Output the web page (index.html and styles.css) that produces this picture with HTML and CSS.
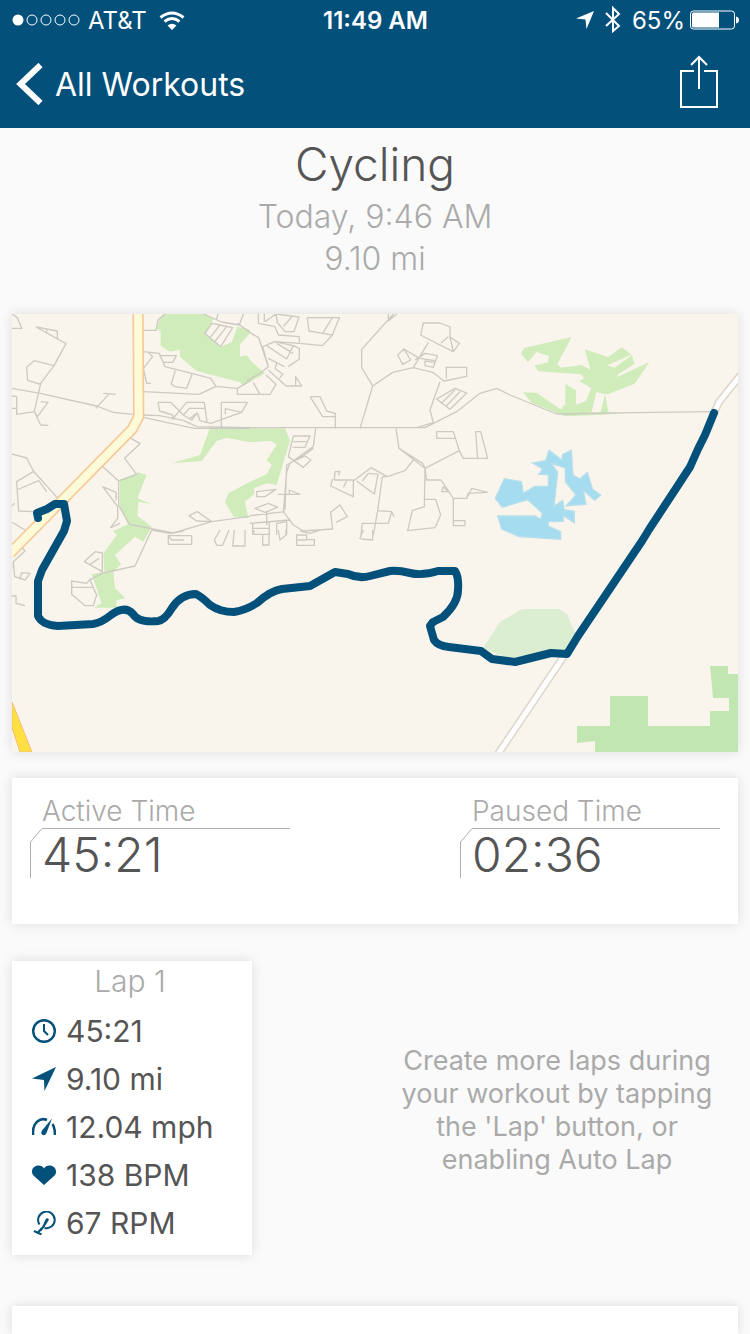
FILE: index.html
```html
<!DOCTYPE html>
<html lang="en">
<head>
<meta charset="utf-8">
<meta name="viewport" content="width=device-width, initial-scale=1">
<title>Cycling workout</title>
<link rel="stylesheet" href="styles.css">
</head>
<body>
<header class="top">
  <div class="status">
    <div class="status-side">
      <svg class="signal" width="68" height="12" viewBox="0 0 68 12" aria-hidden="true">
        <circle cx="6" cy="6" r="5.5" fill="#fff"/>
        <g fill="none" stroke="#fff"><circle cx="20" cy="6" r="5"/><circle cx="34" cy="6" r="5"/><circle cx="48" cy="6" r="5"/><circle cx="62" cy="6" r="5"/></g>
      </svg>
      <span class="carrier">AT&amp;T</span>
      <svg width="26" height="19" viewBox="0 0 26 19" aria-hidden="true">
        <g fill="none" stroke="#fff" stroke-width="3"><path d="M1.500 6.500Q13-2.500 24.500 6.500"/><path d="M5.500 10.500Q13 4.500 20.500 10.500"/></g>
        <path d="M8.500 14.500Q13 11 17.500 14.500L13 19Z" fill="#fff"/>
      </svg>
    </div>
    <span class="clock">11:49 AM</span>
    <div class="status-side status-end">
      <svg width="18" height="18" viewBox="0 0 18 18" aria-hidden="true"><path d="M18 0L10.500 18L9.500 8.500L0 7.500Z" fill="#fff"/></svg>
      <svg class="bluetooth" width="16" height="28" viewBox="0 0 16 28" aria-hidden="true"><path d="M1 7L14 20L8 25V2L14 8L1 20" fill="none" stroke="#fff" stroke-width="2"/></svg>
      <span class="percent">65%</span>
      <svg width="49" height="20" viewBox="0 0 49 20" aria-hidden="true"><rect x=".5" y="1" width="44" height="18" rx="3" fill="none" stroke="#fff"/><path d="M3.500 2.500H29V17.500H3.500Q2 17.500 2 16V4Q2 2.500 3.500 2.500ZM46 6.500Q49 7 49 10T46 13.500Z" fill="#fff"/></svg>
    </div>
  </div>
  <nav class="nav">
    <a class="back" href="#workouts">
      <svg width="27" height="42" viewBox="0 0 27 42" aria-hidden="true"><path d="M24.500 2L4.500 21L24.500 40" fill="none" stroke="#fff" stroke-width="6"/></svg>
      <span>All Workouts</span>
    </a>
    <button class="share" type="button" aria-label="Share">
      <svg width="38" height="54" viewBox="0 0 38 54" aria-hidden="true"><path d="M14 16H1V52H37V16H24M19 34V2M11 10L19 2L27 10" fill="none" stroke="#fff" stroke-width="2"/></svg>
    </button>
  </nav>
</header>

<main class="page">
  <section class="summary">
    <h1 class="title">Cycling</h1>
    <p class="meta">Today, 9:46 AM</p>
    <p class="meta">9.10 mi</p>
  </section>

  <svg class="map card" viewBox="12 314 726 438" preserveAspectRatio="xMidYMid slice" role="img" aria-label="Route map">
    <rect x="0" y="300" width="760" height="470" fill="#f9f5ed"/>
    <g fill="#d0ecbb">
      <g transform="translate(0 305) scale(.33333)">
        <path d="M495 27H610L640 42L625 75L614 88L662 125L695 112L712 65L750 75V85L720 118V155L740 150L755 170L795 205L730 242L720 232L590 198L540 155V135L510 140L482 122V80L470 70L480 40Z"/>
        <path d="M630 370H855L870 408L830 540L800 535L762 550V568L735 590L745 640L700 635L675 590L685 565L750 530L800 508L815 480L800 465L830 420L815 408L750 412L680 398L650 408L605 468L515 475L600 450Z"/>
        <path d="M360 525L415 502L440 510L412 580L455 598L415 590L412 632L455 665L430 710L405 695L345 750L363 778L340 800L345 850L377 880L350 885V908H280L305 895L275 808L313 800L310 745L350 690L340 678L385 658L360 610Z"/>
      </g>
      <g transform="translate(490 305) scale(.33333)">
        <path d="M102 129L245 96L202 177L213 188L274 180L302 194L284 133L355 156L396 127L424 149L352 181L373 188L426 151L433 177L382 209V216L478 171L434 236L355 267L345 268L357 327H330L345 268L319 261L305 322L410 324L340 329L224 334L125 293L99 262L140 263L212 313L226 298V237L258 256V299L288 288L304 250L268 228L283 219L272 208L145 199L133 182L174 172L177 154L139 141L114 172L93 146Z"/>
      </g>
    </g>
    <g transform="translate(480 440) scale(.33333)" fill="#a6dcf0" stroke="#b9dfea" stroke-width="4">
      <path d="M73 116L124 125L130 160L164 139H205V104L177 103L188 86L157 69L197 62L207 31L246 60L248 43L274 31L279 105L300 117L322 97L338 148L362 165L344 181L310 151L318 193L258 198L288 165L256 125V84L214 70L233 97L222 199L248 181L252 209L283 214V249L250 226V244L205 245V258L242 275V298L117 290L65 267L53 228H164L182 238L187 219L143 179L67 202L46 175Z"/>
    </g>
    <g fill="#c2e6b1">
      <path d="M577 726H610V696H648V726H710V711H729V698H713L710 666H728V674H740V754H595V741L577 743Z"/>
      <path d="M483 648L500 622L522 609H559L567 614L576 635L568 655L515 662Z" fill="#dbeed1"/>
    </g>
    <g fill="none" stroke="#cdcac3" stroke-width="4" stroke-linejoin="round">
      <g transform="translate(0 305) scale(.33333)">
        <path d="M36 27L52 38L65 70H36M108 66L198 116L162 182L122 235L103 320L50 328V275L36 273M108 66L172 78V102M140 82V70M162 182L102 167L80 187L83 226L122 238M36 250L120 265L290 303L340 322L400 328M310 265L347 268M328 266L287 310M36 310H50M122 290L144 292L112 335L103 320L122 360L145 361"/>
        <path d="M430 76H468L474 45L495 27M430 140L478 145L495 185L575 205L632 220L648 244L712 250V268H750M445 142L458 155L430 190L440 235H453M480 152H529L518 172H490ZM526 196L514 236L522 244L560 250L576 208M430 260L475 262L597 268L648 244M430 330L478 332L550 346L590 365L750 368M430 337L583 370H750M474 292H512L550 330L575 345L592 323L600 347L632 355L725 322L742 292H664V365M474 292L479 318L518 330V342L560 292H613L621 350M566 343L592 323M676 328V311L725 322M550 330L568 310H616"/>
        <path d="M614 85L636 55L660 60L698 68L662 125ZM630 98L660 60M646 108L680 65M610 27L665 51L718 60L730 27M650 42L654 27M712 55L750 82M712 250L755 225"/>
        <path d="M36 447L80 459L100 498L174 580M100 500L50 530L56 618L100 620M50 555L116 527L140 560M388 397L420 416L374 460L410 508L356 528V600L388 658L520 684L635 650L750 634M305 482L356 528M308 545L348 562V586M308 545L353 605V640L332 668L360 655M567 632L592 620L635 650L590 648ZM36 602L44 595M36 652L75 675"/>
        <path d="M455 675L405 783L305 805L270 825L290 870L280 902H255L215 868V828L260 835L272 820M215 847H277M253 770L285 740L307 744V800ZM270 778L297 760M60 720L75 738L40 770L44 815L75 825L90 805L65 803L60 822M40 770V790M36 873H48V895L75 902M505 690V718H575V692H505L515 705H552M455 675L510 685L550 678M660 675L643 705L650 721H668L687 675M703 675L698 723H735V675M762 675V688H807V720H788V690M835 675L840 705L858 690V675M890 690H920V704H943V721H890ZM890 705H920M900 678L930 685L960 675M1090 675L1080 700L1085 702L1118 705V675"/>
      </g>
      <g transform="translate(250 305) scale(.33333)">
        <path d="M-10 368H525L620 320L690 265L740 250L780 270L920 327L1150 323L1390 320M25 27V55L75 65L85 90L148 95V112M43 50V27M82 50L78 27L147 36L132 80H105L80 50M100 65L125 36M45 50L78 27M172 38H268L247 90L218 122L148 115L74 110L38 125L55 185L30 205L-10 228M172 38L177 78L218 85L247 90M218 85L247 38M0 83L26 98L55 185M50 122L110 162L130 122L74 110M80 115L130 145M55 160L103 185M115 185L148 162V130L130 122M55 195L108 243H155L137 215V243M10 233L30 268H0M30 268H60L78 238L48 210M80 175L75 190L98 208L88 220"/>
        <path d="M440 27L415 48L430 27L335 133V187L368 243L330 370M368 243L428 202L490 188L548 202L582 228L650 214V187H589V220M415 27V48M520 54H570L600 66V96L610 140L570 120L512 90ZM600 96L628 115L610 140M573 114L595 95M535 112L490 188M462 132L443 150L458 178L482 165ZM462 132L508 160M495 165L525 145L562 152L550 187L525 182V168L555 172M510 160L555 167M180 275H210L230 318L256 325V370M180 275L218 335H256M570 230L540 315L550 353L500 368M560 282L615 250L650 264L600 313ZM573 296L615 255M588 304L630 260"/>
        <path d="M197 370L190 425L120 475L110 500L100 620L130 660L160 678L248 672L242 622L270 600L292 635L258 652M190 430L160 452L110 480L105 615M130 393H180L165 427H128M130 410H170M130 393L115 455L160 487L183 465L165 453L140 465M83 568H150L118 555V570M20 560L78 553L45 575H20ZM15 610L55 595L83 607L45 622ZM0 632L105 620M8 690V655L58 650V690M8 670H58M50 622V660M80 690V655L110 650V690M0 655L120 645"/>
        <path d="M253 525L255 500L270 500L265 510M253 525H310V575L242 543L248 522M290 528L280 547M310 528L363 488L412 515L465 497L490 465M320 528L373 567L384 508L355 505L337 528M412 515H397L383 617L370 690M383 617L425 620L415 655H337L333 690M425 620L432 635M438 370L447 430L518 475L525 490L628 437L610 380H560V400H615M628 437L640 460H713L692 380H677L683 460M447 430L525 490L530 525H573L610 580H650L665 550L713 562L655 565L650 580M525 490L523 605L487 617L473 677L555 668L572 630L557 583H523M580 545L595 560L575 560ZM610 580V662H645V647H610"/>
      </g>
    </g>
    <g fill="none" stroke-linejoin="round">
      <g transform="translate(0 305) scale(.33333)">
        <path d="M414 0L416 335L397 372L30 745" stroke="#f6ca98" stroke-width="34"/>
        <path d="M414 0L416 335L397 372L30 745" stroke="#fdfad8" stroke-width="24"/>
      </g>
      <path d="M12 702L32 752L20 752L12 728Z" fill="#ffe042" stroke="#f9bd77"/>
      <g stroke="#ddd5ca" stroke-width="8"><path d="M564 656L496 757M714 413L719 402L744 371"/></g>
      <g stroke="#fff" stroke-width="5"><path d="M564 656L496 757M714 413L719 402L744 371"/></g>
      <path d="M38 518L37 513L47 509L55 504H64L67 521L64 531L42 570L38 581V616Q42 625 58 626L93 624Q101 623 111 615Q125 605 133 614Q138 623 158 621Q165 620 172 608Q181 594 196 594Q202 597 210 605Q220 612 234 612Q246 610 257 603Q270 591 282 589L310 586L335 572L348 574Q359 579 370 576L390 571Q398 570 410 573Q422 576 438 571L455 571Q459 577 458 590Q458 603 443 617L433 622L430 626L434 640Q438 646 449 647L481 651L492 659L515 662L551 653L567 654L578 636L642 541L650 528L673 493L690 467L698 449L705 435L714 413" stroke="#03507a" stroke-width="8" stroke-linecap="round"/>
    </g>
  </svg>

  <section class="times card">
    <div class="time">
      <h2 class="time-label">Active Time</h2>
      <div class="rule"><svg class="corner" width="12" height="14" viewBox="0 0 12 14" aria-hidden="true"><path d="M.5 14L12 .5" fill="none" stroke="#aeaeae"/></svg></div>
      <p class="time-value">45:21</p>
    </div>
    <div class="time">
      <h2 class="time-label">Paused Time</h2>
      <div class="rule"><svg class="corner" width="12" height="14" viewBox="0 0 12 14" aria-hidden="true"><path d="M.5 14L12 .5" fill="none" stroke="#aeaeae"/></svg></div>
      <p class="time-value">02:36</p>
    </div>
  </section>

  <section class="laps">
    <article class="lap card">
      <h2 class="lap-title">Lap 1</h2>
      <ul class="stats">
        <li><svg viewBox="0 0 24 24" aria-hidden="true"><circle cx="12" cy="12" r="10.800" fill="none" stroke="#03507a" stroke-width="2.400"/><path d="M12 5V12L16 16" fill="none" stroke="#03507a" stroke-width="2"/></svg>45:21</li>
        <li><svg viewBox="0 0 24 24" aria-hidden="true"><path d="M24 0L12.500 24L12 13L0 11.500Z" fill="#03507a"/></svg>9.10 mi</li>
        <li><svg viewBox="0 0 24 24" aria-hidden="true"><path d="M1 20V17C1 8 8 2 15 5M20.500 9Q23 13 23 20" fill="none" stroke="#03507a" stroke-width="2.600"/><path d="M20 3.500L14.500 18Q12.500 21.500 10 19.500Q8.500 18 10 15.500Z" fill="#03507a"/></svg>12.04 mph</li>
        <li><svg viewBox="0 0 24 24" aria-hidden="true"><path d="M12 22L2 13C0 11 0 10 0 8.500C0 5 3 2.500 6.500 2.500C9 2.500 11 3.500 12 5.500C13 3.500 15 2.500 17.500 2.500C21 2.500 24 5 24 8.500C24 10 24 11 22 13Z" fill="#03507a"/></svg>138 BPM</li>
        <li><svg viewBox="0 0 24 24" aria-hidden="true"><path d="M7.500 13.500A8.300 8.300 0 1 1 12.500 17" fill="none" stroke="#03507a" stroke-width="2"/><path d="M17 8.500L12.500 16L9 20.500L8 19L11 14L13.500 8.500Q15 6 17 8.500Z" fill="#03507a"/><path d="M2 20L9.500 23.500M6 21.500L10 17" fill="none" stroke="#03507a" stroke-width="2"/></svg>67 RPM</li>
      </ul>
    </article>
    <p class="hint">Create more laps during your workout by tapping the 'Lap' button, or enabling Auto Lap</p>
  </section>

  <section class="next card" aria-label="More details"></section>
</main>
</body>
</html>
```
FILE: styles.css
```css
* { box-sizing: border-box; }

body {
  margin: 0;
  min-height: 100vh;
  display: flex;
  flex-direction: column;
  background: #fafafa;
  color: #555;
  font-family: Inter, "Liberation Sans", sans-serif;
}

h1, h2, p, ul { margin: 0; padding: 0; }
svg { display: block; flex: none; }

.top { background: #03507a; color: #fff; }

.status {
  display: grid;
  grid-template-columns: 1fr auto 1fr;
  align-items: center;
  height: 40px;
  padding: 0 11px 0 12px;
  font-size: 24px;
}
.status-side { display: flex; align-items: center; gap: 8px; }
.carrier { margin-right: 4px; }
.status-end { justify-content: flex-end; gap: 5px; }
.bluetooth { margin: 0 6px; }
.clock { font-weight: 600; }

.nav {
  display: flex;
  align-items: center;
  justify-content: space-between;
  height: 88px;
  padding: 0 32px 0 16px;
}
.back {
  display: flex;
  align-items: center;
  gap: 12px;
  color: #fff;
  font-size: 32px;
  text-decoration: none;
}
.share { padding: 0 0 4px; border: 0; background: none; }

.page {
  flex: 1;
  display: flex;
  flex-direction: column;
  padding: 0 12px;
}
.card { background: #fff; box-shadow: 0 0 12px rgba(0, 0, 0, 0.12); }

.summary { padding: 6px 0 34px; text-align: center; }
.title { margin-bottom: 2px; font-size: 46px; font-weight: 300; line-height: 60px; }
.meta { color: #aaa; font-size: 32px; font-weight: 300; line-height: 42px; }

.map { width: 100%; height: auto; margin-bottom: 26px; }

.times {
  display: flex;
  justify-content: space-between;
  margin-bottom: 37px;
  padding: 16px 18px 46px;
}
.time { width: 260px; }
.time-label {
  padding-left: 12px;
  color: #aaa;
  font-size: 28px;
  font-weight: 300;
  line-height: 34px;
}
.rule { height: 0; margin-left: 12px; border-top: 1px solid #aeaeae; }
.corner { margin: -1px 0 0 -12px; }
.time-value {
  margin-top: 13px;
  padding-left: 11px;
  border-left: 1px solid #aeaeae;
  font-size: 48px;
  font-weight: 300;
  line-height: 26px;
  height: 36px;
}

.laps { display: flex; align-items: center; margin-bottom: 51px; }
.lap { width: 240px; padding-bottom: 8px; }
.lap-title {
  color: #aaa;
  font-size: 30px;
  font-weight: 300;
  line-height: 40px;
  text-align: center;
  padding-right: 4px;
}
.stats { padding: 6px 0 0 20px; list-style: none; }
.stats li {
  display: flex;
  align-items: center;
  gap: 10px;
  height: 48px;
  font-size: 30px;
  white-space: nowrap;
}
.stats svg { width: 24px; height: 24px; }
.hint {
  width: 324px;
  margin: 4px 19px 0 auto;
  color: #aaa;
  font-size: 27px;
  line-height: 33px;
  text-align: center;
}

.next { flex: 1; min-height: 28px; }
```
